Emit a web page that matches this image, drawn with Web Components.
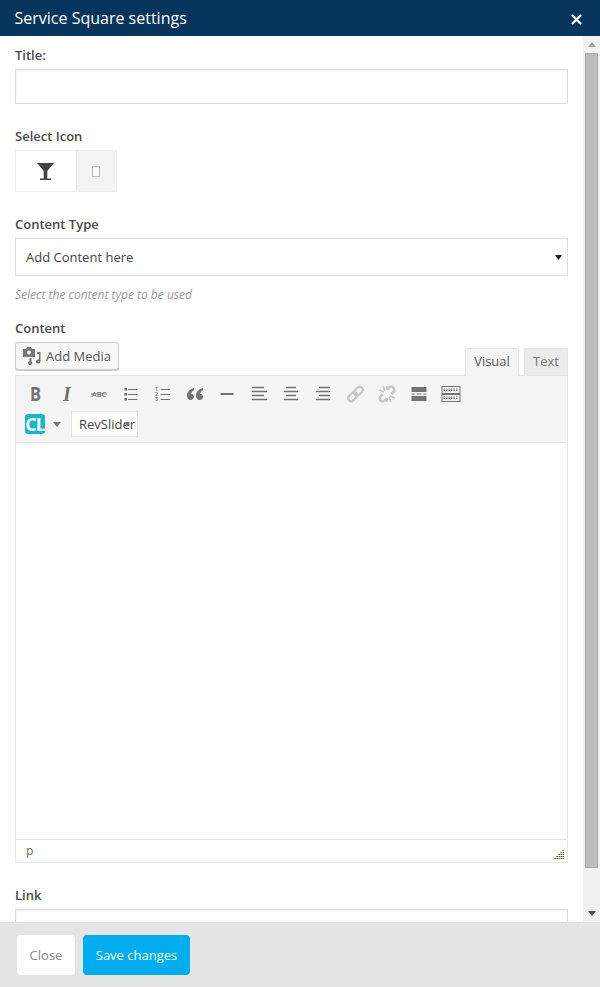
<!DOCTYPE html>
<html>
<head>
<meta charset="utf-8">
<title>Service Square settings</title>
<style>
  html, body { margin: 0; height: 100%; background: #fff; overflow: hidden; }
  body { font-family: "Open Sans", "Liberation Sans", sans-serif; color: #444; }
</style>
</head>
<body>
<settings-modal heading="Service Square settings">
  <field-label style="margin-top:10px">Title:</field-label>
  <text-input style="margin-top:5px"></text-input>

  <field-label style="margin-top:23px">Select Icon</field-label>
  <icon-picker style="margin-top:5px"></icon-picker>

  <field-label style="margin-top:23px">Content Type</field-label>
  <select-box style="margin-top:5px">Add Content here</select-box>
  <help-text style="margin-top:10px">Select the content type to be used</help-text>

  <field-label style="margin-top:16px">Content</field-label>
  <rich-editor style="margin-top:5px"></rich-editor>

  <field-label style="margin-top:23px">Link</field-label>
  <text-input style="margin-top:5px"></text-input>
</settings-modal>

<script>
// small helper, every component just sets its html in the constructor
function shadow(el, html){
  el.attachShadow({mode:"open"}).innerHTML = html;
}

class SettingsModal extends HTMLElement {
  constructor(){
    super();
    shadow(this, `
    <style>
      :host { display:flex; flex-direction:column; width:600px; height:987px; overflow:hidden; background:#fff; }
      header { flex:none; height:36px; background:#08355b; color:#fff; display:flex; align-items:center; justify-content:space-between; padding:0 18px 0 14.5px; font-size:16px; line-height:36px; }
      header svg { display:block; margin-top:2px; }
      .middle { flex:1; min-height:0; display:flex; }
      .scroll { flex:1; min-width:0; overflow:hidden; padding:0 15px; }
      footer { flex:none; height:65px; box-sizing:border-box; border-top:1px solid #e0e0e0; background:#e5e5e5; display:flex; align-items:flex-start; gap:8px; padding:12px 17px 0; }
      .btn { height:40px; box-sizing:border-box; border-radius:4px; font-size:13px; line-height:40px; text-align:center; }
      .close { width:58px; background:#fff; color:#888; }
      .save { width:107px; background:#00aeef; color:#fff; }
    </style>
    <header><span></span>
      <svg width="11" height="11" viewBox="0 0 11 11"><path d="M1 1l9 9M10 1l-9 9" stroke="#fff" stroke-width="2.3" fill="none"/></svg>
    </header>
    <div class="middle">
      <div class="scroll"><slot></slot></div>
      <fake-scrollbar></fake-scrollbar>
    </div>
    <footer><div class="btn close">Close</div><div class="btn save">Save changes</div></footer>`);
    this.shadowRoot.querySelector("header span").textContent = this.getAttribute("heading");
  }
}

class FakeScrollbar extends HTMLElement {
  constructor(){
    super();
    shadow(this, `
    <style>
      :host { flex:none; display:flex; flex-direction:column; align-items:center; width:17px; background:#f1f1f1; }
      .arrow { flex:none; height:17px; display:flex; align-items:center; justify-content:center; }
      .thumb { width:13px; height:815px; box-sizing:border-box; background:#bcbcbc; border:1px solid #a9a9a9; }
      .gap { flex:1; }
    </style>
    <div class="arrow"><svg width="8" height="5"><path d="M4 0l4 5H0z" fill="#a3a3a3"/></svg></div>
    <div class="thumb"></div>
    <div class="gap"></div>
    <div class="arrow"><svg width="8" height="5"><path d="M0 0h8L4 5z" fill="#505050"/></svg></div>`);
  }
}

class FieldLabel extends HTMLElement {
  constructor(){
    super();
    shadow(this, `
    <style>:host { display:block; font-size:13px; font-weight:600; line-height:18px; color:#4a4a4a; }</style>
    <slot></slot>`);
  }
}

class HelpText extends HTMLElement {
  constructor(){
    super();
    shadow(this, `
    <style>:host { display:block; font-size:12px; font-style:italic; line-height:17px; color:#999; }</style>
    <slot></slot>`);
  }
}

class TextInput extends HTMLElement {
  constructor(){
    super();
    shadow(this, `
    <style>
      :host { display:block; height:35px; width:553px; box-sizing:border-box; background:#fff; border:1px solid #ddd; box-shadow:inset 0 1px 2px rgba(0,0,0,.07); }
    </style>`);
  }
}

class IconPicker extends HTMLElement {
  constructor(){
    super();
    shadow(this, `
    <style>
      :host { display:flex; width:102px; height:42px; box-sizing:border-box; border:1px solid #eee; }
      .cur { width:61px; box-sizing:border-box; display:flex; align-items:center; justify-content:center; background:#fff; border-right:1px solid #e5e5e5; padding-right:2px; }
      .next { flex:1; display:flex; align-items:center; justify-content:center; background:#f3f3f3; padding-right:2px; }
      .box { width:6px; height:9px; border:1px solid #b9b9b9; background:#f8f8f8; }
    </style>
    <div class="cur"><svg width="17" height="17" viewBox="0 0 17 17"><path d="M0 0h17L10.300 8v7.500h3.700V17H3v-1.500h3.700V8z" fill="#444"/></svg></div>
    <div class="next"><div class="box"></div></div>`);
  }
}

class SelectBox extends HTMLElement {
  constructor(){
    super();
    shadow(this, `
    <style>
      :host { display:flex; align-items:center; justify-content:space-between; width:553px; height:38px; box-sizing:border-box; border:1px solid #ddd; background:#fff; padding:0 5px 0 10px; font-size:13px; color:#444; }
    </style>
    <slot></slot>
    <svg width="7" height="5"><path d="M0 0h7L3.5 5z" fill="#222"/></svg>`);
  }
}

const GREY = "#737373", PALE = "#c6c6c6";
const toolIcons = [
  `<text x="10.500" y="17" text-anchor="middle" textLength="11" lengthAdjust="spacingAndGlyphs" font-family="Open Sans,sans-serif" font-weight="700" font-size="19" fill="${GREY}">B</text>`,
  `<text x="10" y="17" text-anchor="middle" font-family="Liberation Serif,serif" font-style="italic" font-weight="700" font-size="20" fill="${GREY}">I</text>`,
  `<text x="10" y="13" text-anchor="middle" font-family="Open Sans,sans-serif" font-size="7.500" font-weight="600" fill="${GREY}">ABC</text><path d="M2 10h16" stroke="${GREY}" stroke-width=".8"/>`,
  `<path d="M3.500 4h2.500v2.500H3.500zM3.500 9h2.500v2.500H3.500zM3.500 14h2.500v2.500H3.500z" fill="#666"/><path d="M7 5.500h9.500M7 10.500h9.500M7 15.500h9.500" stroke="${GREY}"/>`,
  `<foreignObject x="2" y="2.500" width="6" height="16"><div xmlns="http://www.w3.org/1999/xhtml" style="font:600 5.500px/5.200px 'Open Sans',sans-serif;color:#666;white-space:pre">1
2
3</div></foreignObject><path d="M7.500 5.500h9.500M7.500 10.500h9.500M7.500 15.500h9.500" stroke="${GREY}"/>`,
  `<path d="M9 4C5 5 2 7.500 2 11.500 2 14.500 3.500 16 5.500 16 7.500 16 9 14.700 9 12.800 9 11 7.700 9.800 6 9.800c.3-1.500 1.500-2.800 3-3.500zM18 4c-4 1-7 3.500-7 7.500 0 3 1.500 4.500 3.500 4.500s3.500-1.300 3.500-3.200c0-1.800-1.300-3-3-3 .3-1.500 1.500-2.800 3-3.500z" fill="${GREY}"/>`,
  `<path d="M3.500 10h13" stroke="${GREY}" stroke-width="2"/>`,
  `<path d="M3 3.500h12M3 7.500h15M3 11.500h12M3 15.500h15" stroke="${GREY}" stroke-width="1.700"/>`,
  `<path d="M5 3.500h10M3 7.500h14M5 11.500h10M3 15.500h14" stroke="${GREY}" stroke-width="1.700"/>`,
  `<path d="M6 3.500h11M3 7.500h14M6 11.500h11M3 15.500h14" stroke="${GREY}" stroke-width="1.700"/>`,
  `<g fill="none" stroke="${PALE}" stroke-width="2.200" transform="rotate(-45 10.500 10)"><rect x="1.500" y="7" width="10" height="6" rx="3"/><rect x="9.500" y="7" width="10" height="6" rx="3"/></g>`,
  `<g fill="none" stroke="${PALE}" stroke-width="2.600" transform="rotate(-45 10 10)"><path d="M7 7H4a3 3 0 0 0 0 6h3"/><path d="M13 7h3a3 3 0 0 1 0 6h-3"/></g><path d="M6 2l2 5M2 6l5 2M14 18l-2-5M18 14l-5-2M10 2v4M10 14v4" stroke="${PALE}" stroke-width="1.500"/>`,
  `<path d="M2.500 3h15v5h-15zM2.500 12h15v5h-15z" fill="${GREY}"/><path d="M2.500 10h3M7.500 10h5M14.500 10h3" stroke="${GREY}"/>`,
  `<rect x="1" y="2.500" width="18" height="15" fill="none" stroke="${GREY}"/><path d="M1 9.500h18M1 10.500h18" stroke="${GREY}"/><path d="M2.500 5h15M2.500 6.500h15M2.500 13h15M2.500 14.500h15" stroke="${GREY}" stroke-dasharray="1.500 1"/>`
];

class RichEditor extends HTMLElement {
  constructor(){
    super();
    var tools = toolIcons.map(function(p){
      return `<span class="tool"><svg width="20" height="20" viewBox="0 0 20 20">${p}</svg></span>`;
    }).join("");
    shadow(this, `
    <style>
      :host { display:block; width:553px; }
      .top { display:flex; align-items:flex-end; justify-content:space-between; height:33px; }
      .media { align-self:flex-start; display:flex; align-items:center; gap:5px; width:104px; height:28px; box-sizing:border-box; padding-left:7px; border:1px solid #ccc; border-radius:3px; background:#f7f7f7; box-shadow:0 1px 0 #ccc; font-size:13px; color:#555; }
      .tabs { display:flex; gap:5px; }
      .tab { height:28px; box-sizing:border-box; border:1px solid #e5e5e5; background:#ebebeb; color:#777; font-size:13px; line-height:24px; text-align:center; margin-bottom:-1px; position:relative; }
      .tab.on { width:54px; background:#f5f5f5; border-bottom-color:#f5f5f5; color:#555; }
      .tab.off { width:44px; }
      .box { border:1px solid #e5e5e5; }
      .bar { height:67px; box-sizing:border-box; background:#f5f5f5; border-bottom:1px solid #e5e5e5; padding:2px 0 0 3px; }
      .row { display:flex; height:32px; }
      .tool { width:32px; display:flex; align-items:center; justify-content:center; }
      .tool svg { overflow:visible; }
      .row2 { display:flex; align-items:center; height:26px; margin-top:1px; padding-left:6px; }
      .cl { width:20px; height:20px; border-radius:3px; background:#17b9c9; color:#fff; font-size:18px; font-weight:700; line-height:20px; text-align:center; letter-spacing:-1px; }
      .rev { position:relative; width:67px; height:26px; box-sizing:border-box; margin-left:10px; border:1px solid #e3e3e3; background:#fff; padding-left:7px; font-size:13px; line-height:24px; color:#444; white-space:nowrap; }
      .rev svg { position:absolute; left:52px; top:10px; }
      .caret { margin-left:8px; }
      .area { height:396px; background:#fff; }
      .status { height:23px; box-sizing:border-box; border-top:1px solid #e5e5e5; padding-left:10px; font-size:12px; line-height:22px; color:#666; display:flex; justify-content:space-between; background:#fff; }
      .grip { margin:10px 3px 0 0; }
    </style>
    <div class="top">
      <div class="media">
        <svg width="18" height="18" viewBox="0 0 18 18"><path d="M0 2h3l1-2h4l1 2h3v8H0z" fill="#777"/><circle cx="6" cy="5.500" r="2" fill="#f7f7f7"/><path d="M14 5h3.500v9.500a2.200 2 0 1 1-1.500-1.900V7h-2z" fill="#777"/><path d="M6.500 11h2v3.500a2 2 0 1 1-2-.4z" fill="#777"/></svg>
        <span>Add Media</span>
      </div>
      <div class="tabs"><div class="tab on">Visual</div><div class="tab off">Text</div></div>
    </div>
    <div class="box">
      <div class="bar">
        <div class="row">${tools}</div>
        <div class="row2">
          <div class="cl">CL</div>
          <svg class="caret" width="8" height="5" viewBox="0 0 8 5"><path d="M0 0h8L4 5z" fill="#777"/></svg>
          <div class="rev">RevSlider<svg width="6" height="5"><path d="M0 0h6L3 5z" fill="#777"/></svg></div>
        </div>
      </div>
      <div class="area"></div>
      <div class="status"><span>p</span>
        <svg class="grip" width="10" height="10" viewBox="0 0 10 10" fill="none">
          <path d="M8 .5h2M6 2.500h4M4 4.500h6M2 6.500h8M0 8.500h10" stroke="#c79a2e" stroke-dasharray="1 1"/>
          <path d="M9 .5h1M7 2.500h3M5 4.500h5M3 6.500h7M1 8.500h9" stroke="#3a5da8" stroke-dasharray="1 1"/>
        </svg>
      </div>
    </div>`);
  }
}

customElements.define("settings-modal", SettingsModal);
customElements.define("fake-scrollbar", FakeScrollbar);
customElements.define("field-label", FieldLabel);
customElements.define("help-text", HelpText);
customElements.define("text-input", TextInput);
customElements.define("icon-picker", IconPicker);
customElements.define("select-box", SelectBox);
customElements.define("rich-editor", RichEditor);
</script>
</body>
</html>
